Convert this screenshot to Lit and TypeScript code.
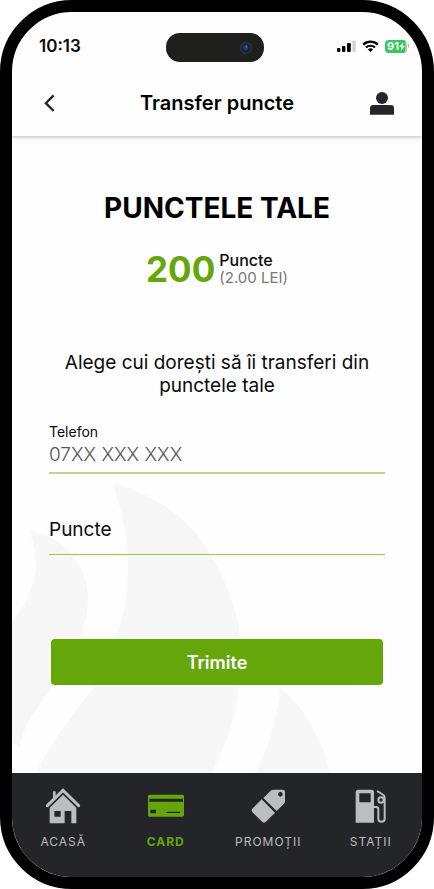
import { LitElement, html, css, svg } from "lit";
import { customElement, property } from "lit/decorators.js";
import { classMap } from "lit/directives/class-map.js";

@customElement("status-bar")
class StatusBar extends LitElement {
  static styles = css`
    :host {
      display: grid;
      grid-template-columns: 1fr auto 1fr;
      align-items: start;
      padding: 21px 13px 0 9px;
    }
    .time {
      padding-left: 18px;
      font-size: 17px;
      line-height: 26px;
      font-weight: 600;
      color: #0a0a0a;
    }
    .island {
      width: 98px;
      height: 29px;
      border-radius: 14px;
      background: #1f1f1d;
      display: flex;
      align-items: center;
      justify-content: flex-end;
      padding-right: 11px;
      box-sizing: border-box;
    }
    .indicators {
      display: flex;
      align-items: center;
      justify-content: flex-end;
      gap: 6px;
      height: 26px;
    }
    .battery {
      display: flex;
      align-items: center;
      gap: 1px;
    }
    .level {
      display: flex;
      align-items: center;
      justify-content: center;
      width: 22px;
      height: 13px;
      border-radius: 4px;
      background: linear-gradient(90deg, #34c759 20px, #a5c9ae 20px);
      color: #fff;
      font-size: 11px;
      line-height: 13px;
      font-weight: 700;
    }
    .cap {
      width: 1px;
      height: 4px;
      border-radius: 0 1px 1px 0;
      background: #b8b8b8;
    }
    svg {
      display: block;
    }
  `;

  render() {
    return html`
      <span class="time">10:13</span>
      <div class="island">
        <svg width="14" height="14" viewBox="0 0 14 14" aria-hidden="true">
          <circle cx="7" cy="7" r="6.5" fill="#2b2e31" />
          <circle cx="7" cy="7" r="4.2" fill="#15202e" />
          <circle cx="6.6" cy="6.6" r="2.6" fill="#12407c" />
          <circle cx="7.4" cy="5.6" r="1.1" fill="#2f78bf" />
        </svg>
      </div>
      <div class="indicators">
        <svg width="19" height="12" viewBox="0 0 19 12" aria-hidden="true">
          <rect x="0" y="8" width="3.4" height="4" rx="1" fill="#000" />
          <rect x="5" y="6" width="3.4" height="6" rx="1" fill="#000" />
          <rect x="10" y="3" width="3.8" height="9" rx="1" fill="#000" />
          <rect x="15.4" y="0.4" width="3.4" height="11.6" rx="1" fill="#d3d3d3" />
        </svg>
        <svg width="17" height="12" viewBox="0 0 17 12" aria-hidden="true">
          <path d="M1.2 4.6a10.6 10.6 0 0 1 14.6 0" fill="none" stroke="#000" stroke-width="2.3" />
          <path d="M4 7.5a6.6 6.6 0 0 1 9 0" fill="none" stroke="#000" stroke-width="2.2" />
          <path d="M8.5 12 5.9 9.4a3.8 3.8 0 0 1 5.2 0z" fill="#000" />
        </svg>
        <div class="battery">
          <span class="level"
            >91<svg width="6" height="9" viewBox="0 0 6 9" aria-hidden="true">
              <path d="M4 0 0.3 5.1h2.3L2 9l3.7-5.2H3.4z" fill="#fff" /></svg
          ></span>
          <span class="cap"></span>
        </div>
      </div>
    `;
  }
}

@customElement("page-header")
class PageHeader extends LitElement {
  @property() heading = "";

  static styles = css`
    :host {
      display: grid;
      grid-template-columns: 1fr auto 1fr;
      align-items: center;
      min-height: 66px;
      padding: 8px 28px 0 28px;
      position: relative;
      box-shadow: 0 1px 4px rgba(0, 0, 0, 0.28);
      clip-path: inset(0 0 -8px 0);
    }
    h2 {
      margin: 0;
      font-size: 20px;
      line-height: 24px;
      font-weight: 600;
      color: #000;
    }
    button {
      display: flex;
      border: 0;
      padding: 0;
      background: none;
      cursor: pointer;
    }
    .back {
      justify-self: start;
      padding: 4px;
    }
    .profile {
      justify-self: end;
    }
  `;

  render() {
    return html`
      <button class="back" aria-label="Înapoi">
        <svg width="12" height="18" viewBox="131 283 36 54">
          <path d="M160 287 136.500 310.500 160 334" fill="none" stroke="#25262b" stroke-width="7" />
        </svg>
      </button>
      <h2>${this.heading}</h2>
      <button class="profile" aria-label="Profil">
        <svg width="24" height="24" viewBox="459 276 72 72">
          <circle cx="495" cy="297" r="18" fill="#25262b" />
          <path d="M459 347v-19q0-10 10-10h52q10 0 10 10v19z" fill="#25262b" />
        </svg>
      </button>
    `;
  }
}

const icons = {
  home: svg`<svg width="36" height="36" viewBox="136 85 108 108" aria-hidden="true">
    <path d="M143 138 190 92l47 46" fill="none" stroke="currentColor" stroke-width="9" stroke-linecap="round"/>
    <path d="M160 95h8v14l-8 8z" fill="currentColor"/>
    <path fill-rule="evenodd" fill="currentColor" d="M190 105 230 144V191H215V154H195V191H150V144zM164 154v17h19v-17z"/>
  </svg>`,
  card: svg`<svg width="36" height="36" viewBox="444 85 108 108" aria-hidden="true">
    <path fill-rule="evenodd" fill="currentColor" d="M449 105h98q5 0 5 5v56q0 5-5 5H449q-5 0-5-5v-56q0-5 5-5zM448 117v9h101v-9zM451 150v11h17v-11zM500 156v4h40v-4z"/>
  </svg>`,
  tag: svg`<svg width="36" height="36" viewBox="97 85 108 108" aria-hidden="true">
    <path fill-rule="evenodd" fill="currentColor" d="M167 90h28q7 0 7 7v28q0 4-3 7L177 154 137 115l22-22q3-3 8-3zM188 97a7 7 0 1 0 .1 0z"/>
    <path fill="currentColor" d="M132 119 172 159 144 187q-5 4-10 0L104 157q-4-5 0-10z"/>
  </svg>`,
  pump: svg`<svg width="36" height="36" viewBox="406 85 108 108" aria-hidden="true">
    <path fill-rule="evenodd" fill="currentColor" d="M422 90h39q8 0 8 8v91H414V98q0-8 8-8zM425 101v27h34v-27z"/>
    <path fill="none" stroke="currentColor" stroke-width="6" d="M469 142h6q7 0 7 7v29q0 8 9.500 8 9.500 0 9.500-8V114q0-5-4-8L478 94"/>
    <circle cx="490" cy="121" r="8" fill="none" stroke="currentColor" stroke-width="6"/>
  </svg>`,
};

@customElement("tab-bar")
class TabBar extends LitElement {
  static styles = css`
    :host {
      display: block;
      position: relative;
      background: #242529;
    }
    nav {
      display: grid;
      grid-template-columns: repeat(4, 1fr);
      padding: 15px 0 26px;
    }
    a {
      display: flex;
      flex-direction: column;
      align-items: center;
      gap: 9px;
      color: #bcbdbf;
      text-decoration: none;
      font-size: 12px;
      line-height: 18px;
      letter-spacing: 1px;
    }
    a.active {
      color: #65a70b;
      font-weight: 700;
    }
    svg {
      display: block;
    }
  `;

  private tabs = [
    { label: "ACASĂ", icon: icons.home, active: false },
    { label: "CARD", icon: icons.card, active: true },
    { label: "PROMOȚII", icon: icons.tag, active: false },
    { label: "STAȚII", icon: icons.pump, active: false },
  ];

  render() {
    return html`<nav>
      ${this.tabs.map(
        (t) => html`<a href="#" class=${classMap({ active: t.active })}>${t.icon}<span>${t.label}</span></a>`
      )}
    </nav>`;
  }
}

@customElement("app-root")
class AppRoot extends LitElement {
  static styles = css`
    :host {
      display: flex;
      flex-direction: column;
      min-height: 100vh;
      box-sizing: border-box;
      border: 12px solid #000;
      border-radius: 72px;
      overflow: hidden;
      background: #fefefe;
      color: #0a0a0a;
      font-family: Inter, "Liberation Sans", sans-serif;
    }
    main {
      flex: 1;
      position: relative;
      isolation: isolate;
      padding: 55px 37px 88px;
    }
    .flames {
      position: absolute;
      z-index: -1;
      left: 0;
      bottom: 0;
    }
    h1 {
      margin: 0 0 26px;
      text-align: center;
      font-size: 28px;
      line-height: 34px;
      font-weight: 700;
      color: #000;
    }
    .points {
      display: flex;
      justify-content: center;
      gap: 4px;
      margin-bottom: 64px;
      font-size: 16px;
      line-height: 18px;
    }
    .amount {
      font-size: 35px;
      line-height: 36px;
      font-weight: 700;
      color: #65a70b;
    }
    .unit {
      display: flex;
      flex-direction: column;
      font-weight: 500;
    }
    .value {
      font-size: 15px;
      font-weight: 400;
      color: #777;
    }
    .intro {
      margin: 0 0 26px;
      text-align: center;
      font-size: 19px;
      line-height: 23px;
    }
    .field {
      display: grid;
      border-bottom: 1px solid #94cc52;
    }
    .phone {
      margin-bottom: 41px;
      border-bottom: 2px solid #b5db88;
    }
    .phone label {
      font-size: 14px;
      line-height: 18px;
    }
    input {
      width: 100%;
      box-sizing: border-box;
      height: 39px;
      border: 0;
      padding: 0 0 9px;
      background: none;
      outline: none;
      font: inherit;
      font-size: 19px;
      color: inherit;
    }
    .phone input {
      height: 31px;
      padding-bottom: 4px;
      font-weight: 300;
    }
    input::placeholder {
      color: #555;
      opacity: 1;
    }
    .floating label,
    .floating input {
      grid-area: 1 / 1;
    }
    .floating label {
      font-size: 19px;
      line-height: 30px;
      pointer-events: none;
    }
    .submit {
      display: block;
      width: calc(100% - 4px);
      height: 46px;
      margin: 84px auto 0;
      border: 0;
      border-radius: 4px;
      background: #65a70b;
      color: #fff;
      font: inherit;
      font-size: 18px;
      font-weight: 600;
      cursor: pointer;
    }
  `;

  render() {
    return html`
      <status-bar></status-bar>
      <page-header heading="Transfer puncte"></page-header>
      <main>
        <svg class="flames" width="320" height="290" viewBox="12 483 320 290" fill="#f7f7f7" aria-hidden="true">
          <path d="M113 483C167 498 195 528 209 552C230 586 241 620 241 655C241 700 230 740 211 773H36C45 752 66 723 93 688C104 670 111 655 116 639C124 615 128 590 128 565C128 540 122 512 113 483Z" />
          <path d="M29 531C62 534 88 565 88 598C88 615 84 628 80 638C74 655 62 674 52 688C35 710 22 728 20 747L12 742V623C24 607 36 587 36 563C36 552 33 540 29 531Z" />
          <path d="M280 687C303 706 324 740 329 773H255C270 745 278 716 280 687Z" />
        </svg>
        <h1>PUNCTELE TALE</h1>
        <div class="points">
          <span class="amount">200</span>
          <span class="unit">Puncte<span class="value">(2.00 LEI)</span></span>
        </div>
        <p class="intro">Alege cui dorești să îi transferi din punctele tale</p>
        <form>
          <div class="field phone">
            <label for="phone">Telefon</label>
            <input id="phone" type="tel" placeholder="07XX XXX XXX" />
          </div>
          <div class="field floating">
            <label for="amount">Puncte</label>
            <input id="amount" type="text" inputmode="numeric" />
          </div>
          <button class="submit" type="button">Trimite</button>
        </form>
      </main>
      <tab-bar></tab-bar>
    `;
  }
}
